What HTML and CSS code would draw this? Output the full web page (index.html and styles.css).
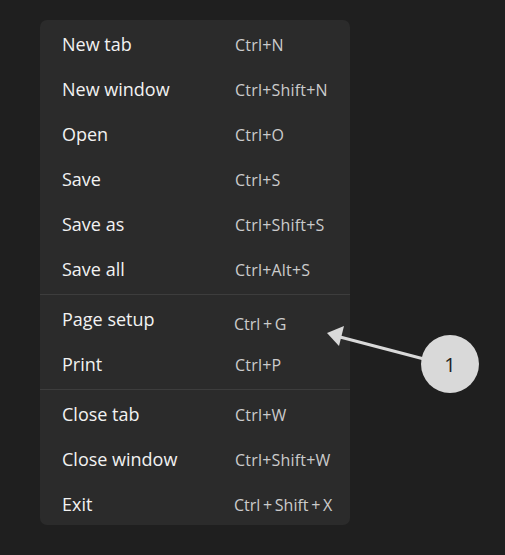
FILE: index.html
```html
<!DOCTYPE html>
<html lang="en">
<head>
<meta charset="utf-8">
<title>Menu</title>
<link rel="stylesheet" href="styles.css">
</head>
<body>
<div class="stage">
  <div class="menu">
    <div class="group">
      <div class="item"><span class="label">New tab</span><span class="key">Ctrl+N</span></div>
      <div class="item"><span class="label">New window</span><span class="key">Ctrl+Shift+N</span></div>
      <div class="item"><span class="label">Open</span><span class="key">Ctrl+O</span></div>
      <div class="item"><span class="label">Save</span><span class="key">Ctrl+S</span></div>
      <div class="item"><span class="label">Save as</span><span class="key">Ctrl+Shift+S</span></div>
      <div class="item"><span class="label">Save all</span><span class="key">Ctrl+Alt+S</span></div>
    </div>
    <div class="sep"></div>
    <div class="group">
      <div class="item"><span class="label">Page setup</span><span class="key key-spaced key-low">Ctrl + G</span></div>
      <div class="item"><span class="label">Print</span><span class="key">Ctrl+P</span></div>
    </div>
    <div class="sep"></div>
    <div class="group">
      <div class="item"><span class="label">Close tab</span><span class="key">Ctrl+W</span></div>
      <div class="item"><span class="label">Close window</span><span class="key">Ctrl+Shift+W</span></div>
      <div class="item"><span class="label">Exit</span><span class="key key-spaced">Ctrl + Shift + X</span></div>
    </div>
  </div>
  <svg class="callout-arrow" width="505" height="555" viewBox="0 0 505 555">
    <line x1="424" y1="359" x2="340" y2="337" stroke="#d9d9d9" stroke-width="3"/>
    <polygon points="327,333 344,326 339,346" fill="#d9d9d9"/>
  </svg>
  <div class="badge">1</div>
</div>
</body>
</html>
```

FILE: styles.css
```css
html, body {
  margin: 0;
  padding: 0;
}
body {
  background: #1f1f1f;
  width: 505px;
  height: 555px;
  overflow: hidden;
  font-family: "Open Sans", "Noto Sans", sans-serif;
}
.stage {
  position: relative;
  width: 505px;
  height: 555px;
  padding: 20px 0 0 40px;
  box-sizing: border-box;
}
.menu {
  width: 310px;
  height: 505px;
  background: #2b2b2b;
  border-radius: 7px;
  padding-top: 2px;
  box-sizing: border-box;
  overflow: hidden;
}
.item {
  height: 45px;
  display: flex;
  align-items: center;
  padding-left: 22px;
}
.label {
  width: 173px;
  font-size: 18px;
  color: #f2f2f2;
  line-height: 45px;
}
.key {
  font-size: 16px;
  letter-spacing: 0.2px;
  color: #cccccc;
  padding-top: 1px;
}
.key-spaced {
  margin-left: -1px;
  letter-spacing: 0;
  word-spacing: -1.5px;
}
.key-low {
  padding-top: 9px;
}
.sep {
  height: 1px;
  background: #3d3d3d;
  margin: 2px 0;
}
.callout-arrow {
  position: absolute;
  left: 0;
  top: 0;
}
.badge {
  position: absolute;
  left: 421px;
  top: 335px;
  width: 58px;
  height: 58px;
  border-radius: 50%;
  background: #d9d9d9;
  color: #222222;
  font-size: 20px;
  display: flex;
  align-items: center;
  justify-content: center;
}
```
